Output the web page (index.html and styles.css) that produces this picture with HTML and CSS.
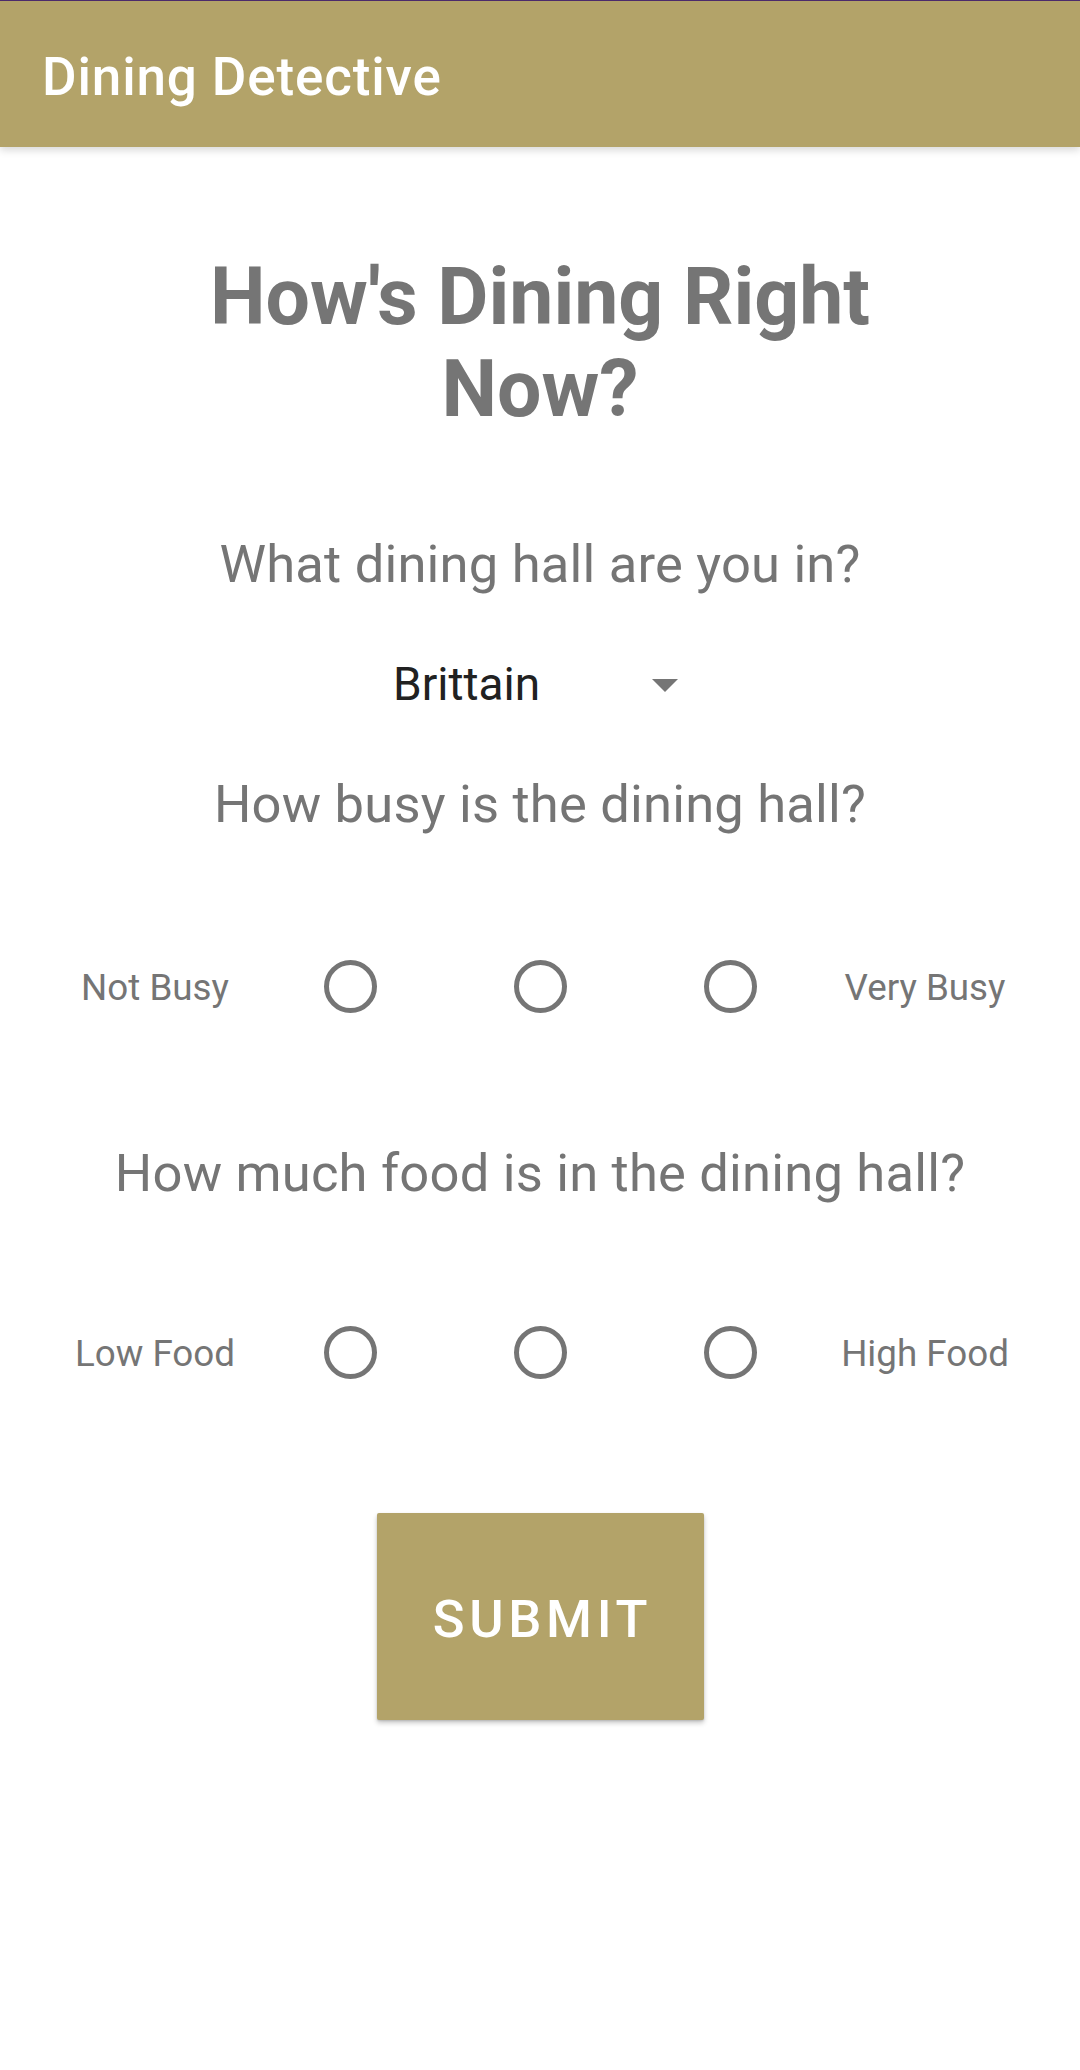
FILE: index.html
```html
<!DOCTYPE html>
<html lang="en">
<head>
<meta charset="utf-8">
<title>Dining Detective</title>
<link rel="stylesheet" href="styles.css">
</head>
<body>
<header class="appbar">
  <div class="appbar-title">Dining Detective</div>
</header>
<main class="content">
  <h1 class="heading">How's Dining Right Now?</h1>
  <p class="question q1">What dining hall are you in?</p>
  <div class="spinner">
    <span class="spinner-text">Brittain</span>
    <svg class="spinner-arrow" width="26" height="13" viewBox="0 0 26 13"><polygon points="0,0 26,0 13,13" fill="#757575"/></svg>
  </div>
  <p class="question q2">How busy is the dining hall?</p>
  <div class="scale row1">
    <span class="scale-label">Not Busy</span>
    <span class="radio"></span>
    <span class="radio"></span>
    <span class="radio"></span>
    <span class="scale-label">Very Busy</span>
  </div>
  <p class="question q3">How much food is in the dining hall?</p>
  <div class="scale row2">
    <span class="scale-label">Low Food</span>
    <span class="radio"></span>
    <span class="radio"></span>
    <span class="radio"></span>
    <span class="scale-label">High Food</span>
  </div>
  <div class="actions">
    <button class="submit" type="button">SUBMIT</button>
  </div>
</main>
</body>
</html>
```
FILE: styles.css
```css
* { box-sizing: border-box; }
html, body {
  margin: 0;
  padding: 0;
  background: #ffffff;
  font-family: Roboto, "Noto Sans", "Liberation Sans", sans-serif;
}
body { width: 1080px; min-height: 2070px; }

.appbar {
  height: 147px;
  background: #B3A369;
  border-top: 1px solid #4B2A6B;
  padding: 45px 0 0 42px;
  box-shadow: 0 3px 8px rgba(0, 0, 0, 0.16);
  position: relative;
  z-index: 1;
}
.appbar-title {
  color: #ffffff;
  font-size: 53px;
  font-weight: 500;
  line-height: 62px;
  letter-spacing: 0.85px;
}

.content {
  display: flex;
  flex-direction: column;
  align-items: center;
}

.heading {
  margin: 104px auto 0;
  max-width: 760px;
  text-align: center;
  color: #757575;
  font-size: 78.75px;
  font-weight: 700;
  line-height: 92px;
}

.question {
  margin: 0;
  text-align: center;
  color: #757575;
  font-size: 52.5px;
  font-weight: 400;
  line-height: 62px;
  letter-spacing: 0.2px;
}
.q1 { margin-top: 98px; }
.q2 { margin-top: 62px; }
.q3 { margin-top: 129px; }

.spinner {
  margin-top: 62px;
  width: 320px;
  height: 54px;
  display: flex;
  align-items: center;
  padding: 0 22px 0 13px;
}
.spinner-text {
  color: #212121;
  font-size: 46px;
  line-height: 54px;
}
.spinner-arrow {
  margin-left: auto;
  margin-top: 2px;
}

.scale {
  display: grid;
  grid-template-columns: 200px 190px 190px 190px 200px;
  justify-content: center;
  align-items: center;
  justify-items: center;
  height: 53px;
  width: 1080px;
}
.row1 { margin-top: 125px; }
.row2 { margin-top: 122px; }

.scale-label {
  color: #757575;
  font-size: 36.75px;
  line-height: 43px;
  padding-top: 2px;
  white-space: nowrap;
}
.radio {
  width: 53px;
  height: 53px;
  border: 5.25px solid #757575;
  border-radius: 50%;
}

.actions { margin-top: 134px; }
.submit {
  width: 327px;
  height: 207px;
  border: none;
  border-radius: 2px;
  background: #B3A369;
  color: #ffffff;
  font-family: Roboto, "Noto Sans", "Liberation Sans", sans-serif;
  font-size: 52.5px;
  font-weight: 500;
  letter-spacing: 4.7px;
  padding: 5px 0 0 5px;
  box-shadow: 0 3px 5px rgba(0, 0, 0, 0.22), 0 1px 2px rgba(0, 0, 0, 0.12);
}
```
